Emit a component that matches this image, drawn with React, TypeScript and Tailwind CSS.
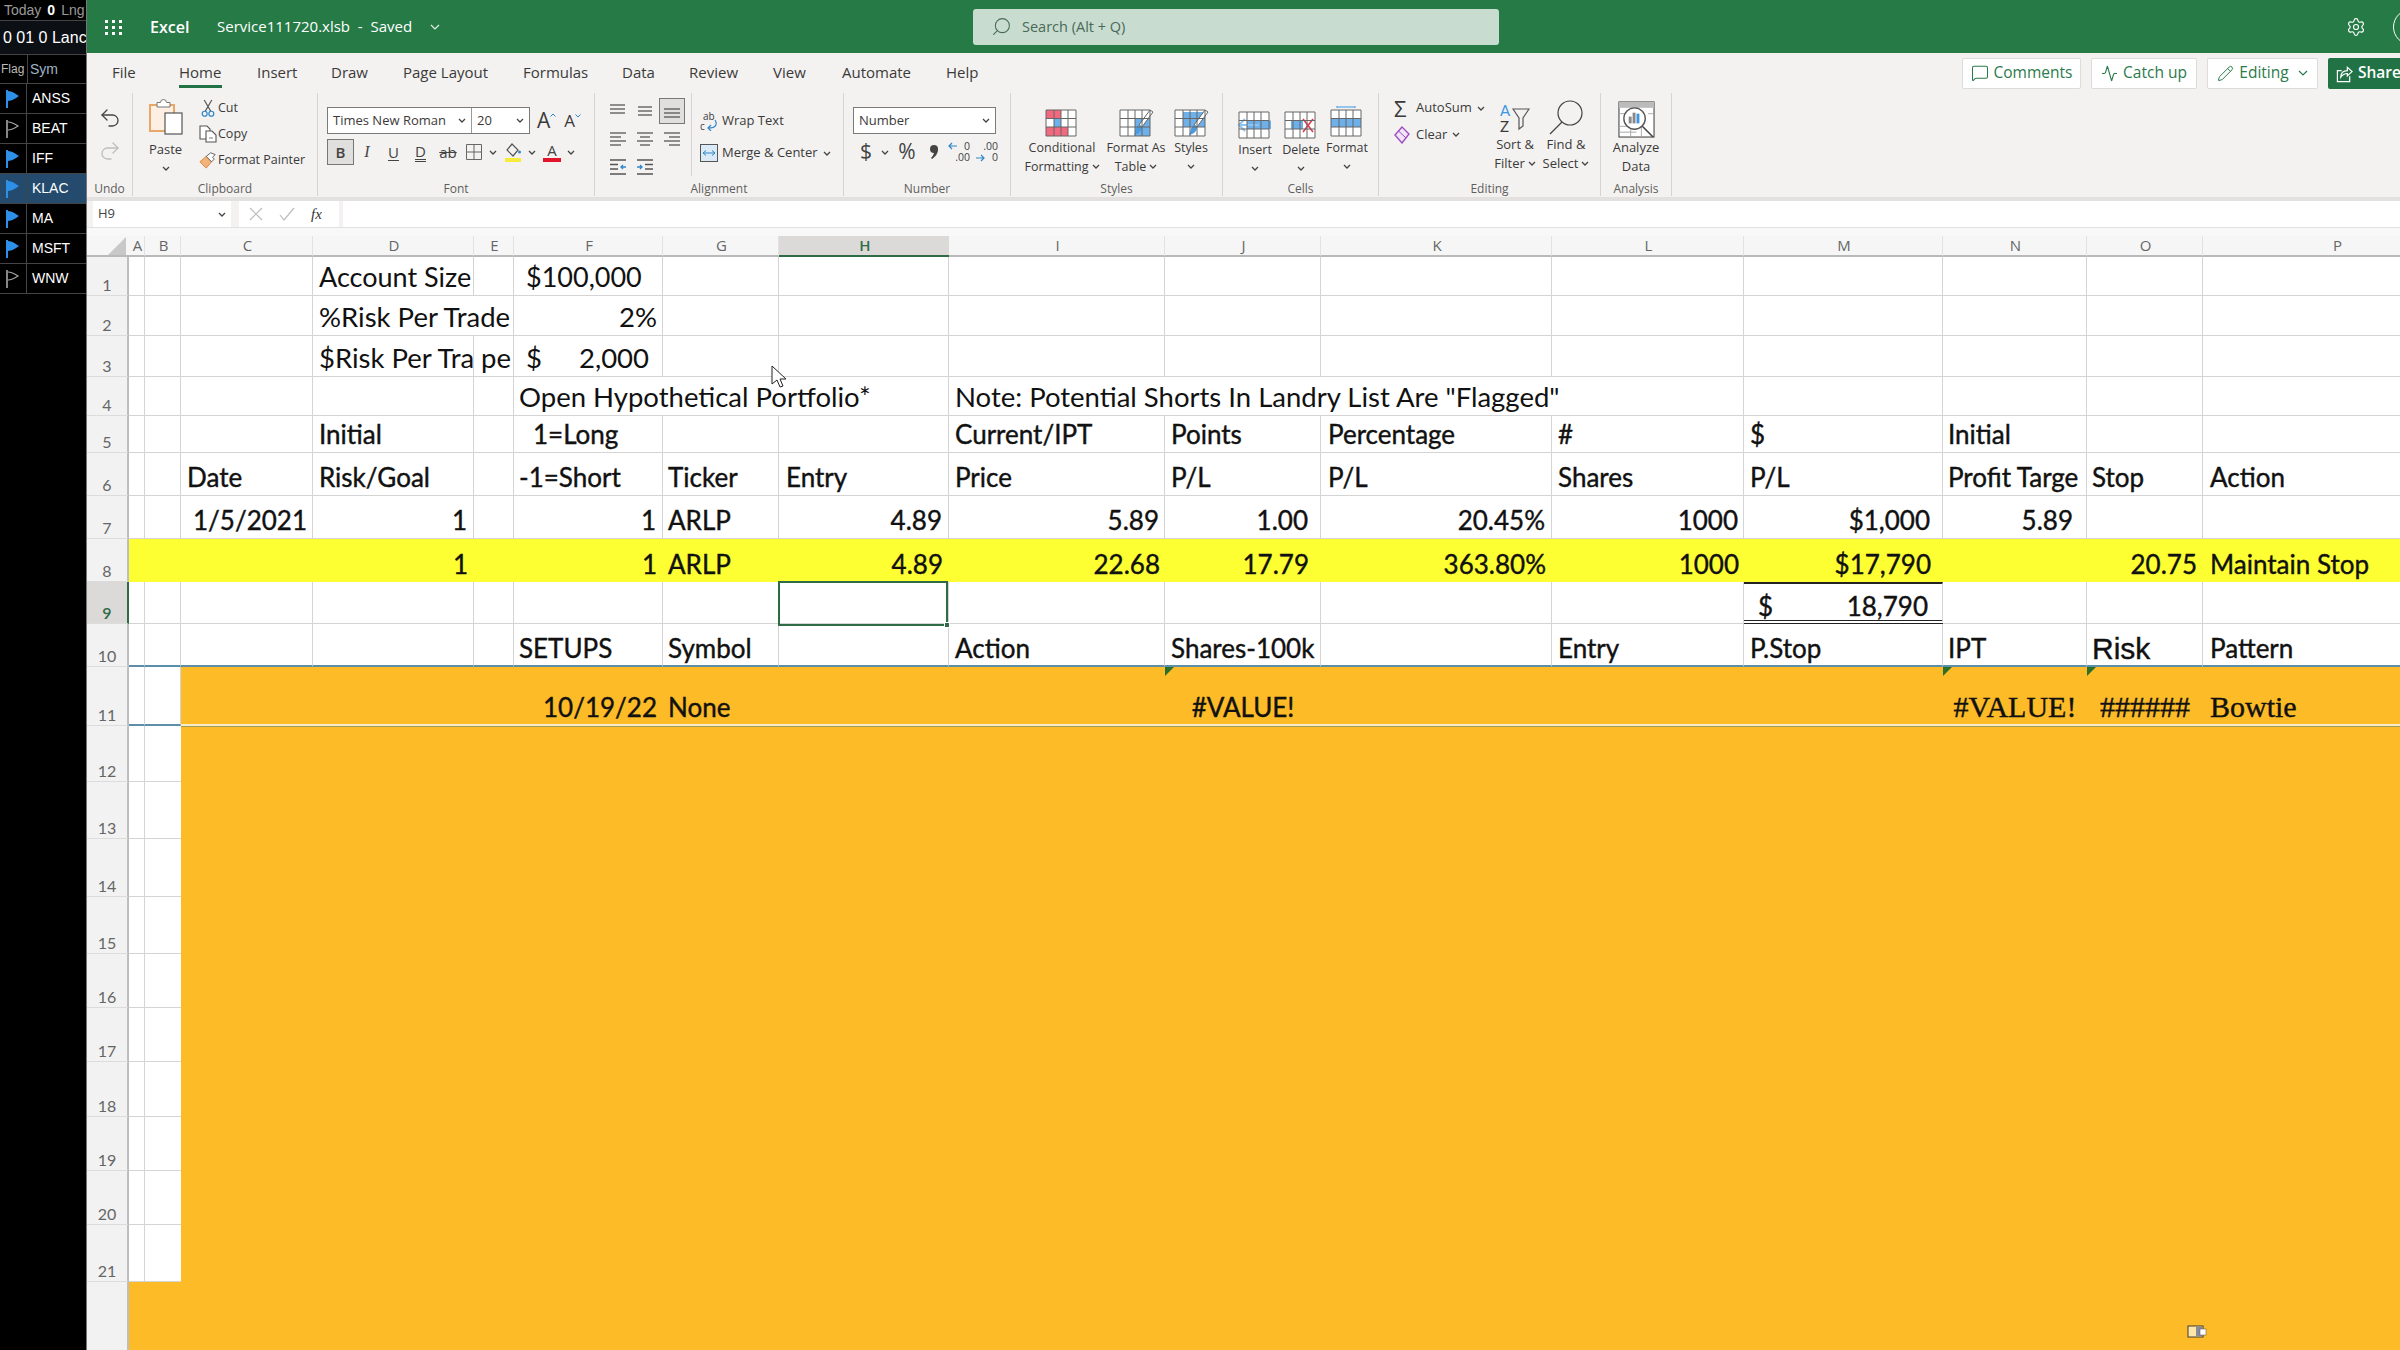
import { Activity, MessageSquare, Pencil, Redo2, Search, Settings, Undo2 } from 'lucide-react';
import type { ReactNode } from 'react';

const COLS = ['A', 'B', 'C', 'D', 'E', 'F', 'G', 'H', 'I', 'J', 'K', 'L', 'M', 'N', 'O', 'P'];

const TABS = [
  { label: 'File', width: 'w-[92px] pl-[25px]' },
  { label: 'Home', width: 'w-[78px]', active: true },
  { label: 'Insert', width: 'w-[74px]' },
  { label: 'Draw', width: 'w-[72px]' },
  { label: 'Page Layout', width: 'w-[120px]' },
  { label: 'Formulas', width: 'w-[99px]' },
  { label: 'Data', width: 'w-[67px]' },
  { label: 'Review', width: 'w-[84px]' },
  { label: 'View', width: 'w-[69px]' },
  { label: 'Automate', width: 'w-[104px]' },
  { label: 'Help', width: 'w-[50px]' },
];

const TICKERS = [
  { sym: 'ANSS', on: true },
  { sym: 'BEAT', on: false },
  { sym: 'IFF', on: true },
  { sym: 'KLAC', on: true, selected: true },
  { sym: 'MA', on: true },
  { sym: 'MSFT', on: true },
  { sym: 'WNW', on: false },
];

type Cell = {
  t?: string;
  left?: string;
  cls?: string;
  size?: string;
  inner?: string;
  span?: string;
  skip?: number;
  box?: string;
  tri?: boolean;
};

const R = 'justify-end pr-[6px]';
const L = 'pl-[6px]';
const SERIF = "font-['Liberation_Serif',serif] text-[30px]";

const CELLS: Record<string, Cell> = {
  D1: { t: 'Account Size', cls: L, size: 'text-[27px]' },
  F1: { t: '$100,000', cls: 'pl-[12px]', size: 'text-[27px]' },
  D2: { t: '%Risk Per Trade', cls: L, span: 'col-span-2', skip: 1 },
  F2: { t: '2%', cls: 'justify-end pr-[5px]' },
  D3: { t: '$Risk Per Tra', cls: L },
  E3: { t: 'pe', cls: 'pl-[7px]' },
  F3: { left: '$', t: '2,000', cls: 'pl-[12px] pr-[13px]' },
  F4: { t: 'Open Hypothetical Portfolio*', cls: 'pl-[5px]', span: 'col-span-3', skip: 2 },
  I4: { t: 'Note: Potential Shorts In Landry List Are "Flagged"', cls: L, span: 'col-span-4', skip: 3 },
  D5: { t: 'Initial', cls: L },
  F5: { t: '1=Long', cls: 'pl-[19px]' },
  I5: { t: 'Current/IPT', cls: L },
  J5: { t: 'Points', cls: L },
  K5: { t: 'Percentage', cls: 'pl-[7px]' },
  L5: { t: '#', cls: L },
  M5: { t: '$', cls: L },
  N5: { t: 'Initial', cls: 'pl-[5px]' },
  C6: { t: 'Date', cls: L },
  D6: { t: 'Risk/Goal', cls: L },
  F6: { t: '-1=Short', cls: 'pl-[5px]' },
  G6: { t: 'Ticker', cls: 'pl-[5px]' },
  H6: { t: 'Entry', cls: 'pl-[7px]' },
  I6: { t: 'Price', cls: L },
  J6: { t: 'P/L', cls: L },
  K6: { t: 'P/L', cls: 'pl-[7px]' },
  L6: { t: 'Shares', cls: L },
  M6: { t: 'P/L', cls: L },
  N6: { t: 'Profit Targe', cls: 'pl-[5px]' },
  O6: { t: 'Stop', cls: 'pl-[5px]' },
  P6: { t: 'Action', cls: 'pl-[7px]' },
  C7: { t: '1/5/2021', cls: 'justify-end pr-[5px]' },
  D7: { t: '1', cls: R },
  F7: { t: '1', cls: R },
  G7: { t: 'ARLP', cls: 'pl-[5px]' },
  H7: { t: '4.89', cls: R },
  I7: { t: '5.89', cls: 'justify-end pr-[5px]' },
  J7: { t: '1.00', cls: 'justify-end pr-[12px]' },
  K7: { t: '20.45%', cls: R },
  L7: { t: '1000', cls: 'justify-end pr-[5px]' },
  M7: { t: '$1,000', cls: 'justify-end pr-[12px]' },
  N7: { t: '5.89', cls: 'justify-end pr-[13px]' },
  D8: { t: '1', cls: R },
  F8: { t: '1', cls: R },
  G8: { t: 'ARLP', cls: 'pl-[5px]' },
  H8: { t: '4.89', cls: R },
  I8: { t: '22.68', cls: 'justify-end pr-[5px]' },
  J8: { t: '17.79', cls: 'justify-end pr-[12px]' },
  K8: { t: '363.80%', cls: R },
  L8: { t: '1000', cls: 'justify-end pr-[5px]' },
  M8: { t: '$17,790', cls: 'justify-end pr-[12px]' },
  O8: { t: '20.75', cls: R },
  P8: { t: 'Maintain Stop', cls: 'pl-[7px]' },
  M9: {
    left: '$',
    t: '18,790',
    cls: 'pl-[14px] pr-[14px]',
    inner: 'leading-[28px]',
    box: 'border-r border-r-[#d4d4d4] border-t-2 border-t-[#222] border-b-[4px] border-double border-b-[#222]',
  },
  F10: { t: 'SETUPS', cls: 'pl-[5px]' },
  G10: { t: 'Symbol', cls: 'pl-[5px]' },
  I10: { t: 'Action', cls: L },
  J10: { t: 'Shares-100k', cls: L },
  L10: { t: 'Entry', cls: L },
  M10: { t: 'P.Stop', cls: L },
  N10: { t: 'IPT', cls: 'pl-[5px]' },
  O10: { t: 'Risk', cls: "pl-[5px] font-['Liberation_Sans',sans-serif] text-[30px]" },
  P10: { t: 'Pattern', cls: 'pl-[7px]' },
  F11: { t: '10/19/22', cls: R },
  G11: { t: 'None', cls: 'pl-[5px]' },
  J11: { t: '#VALUE!', cls: 'justify-center', tri: true },
  N11: { t: '#VALUE!', cls: `justify-center ${SERIF}`, tri: true },
  O11: { t: '######', cls: `justify-center ${SERIF}`, tri: true },
  P11: { t: 'Bowtie', cls: `pl-[7px] ${SERIF}` },
};

function Chev({ className = '' }: { className?: string }) {
  return (
    <svg viewBox="0 0 8 5" className={`h-[5px] w-[8px] shrink-0 ${className}`} fill="none" stroke="#444" strokeWidth="1.3">
      <path d="M1 1l3 3 3-3" />
    </svg>
  );
}

function Flag({ on }: { on: boolean }) {
  return (
    <svg viewBox="0 0 16 18" className="h-[18px] w-[16px]">
      {on ? (
        <>
          <path d="M2 0v18" stroke="#2d8fe8" strokeWidth="2" />
          <path d="M3 1c4 0 8 3 11 5-3 2-7 5-11 5z" fill="#2d8fe8" />
        </>
      ) : (
        <>
          <path d="M2 0v18" stroke="#a8a8a8" strokeWidth="1.6" />
          <path d="M3 2c4 0 7 2 10 4-3 2-6 4-10 4" fill="none" stroke="#a8a8a8" strokeWidth="1.2" />
        </>
      )}
    </svg>
  );
}

function Sidebar() {
  return (
    <aside className="flex w-[87px] shrink-0 flex-col overflow-hidden border-r border-[#777] bg-black font-['Liberation_Sans',sans-serif] whitespace-nowrap">
      <div className="flex h-[21px] items-center gap-[6px] border-b border-[#444] pl-[4px] text-[14px] text-[#9a9a9a]">
        Today <span className="font-bold text-white">0</span> Lng
      </div>
      <div className="flex h-[33px] items-center bg-[#0c1014] pl-[3px] text-[16px] text-white">0 01 0 Lanc</div>
      <div className="flex h-[30px] items-center border-y border-[#444] text-[#9fb4c8]">
        <span className="w-[27px] pl-[1px] text-[12px] text-[#bbb]">Flag</span>
        <span className="border-l border-[#444] pl-[2px] text-[14px] leading-[28px]">Sym</span>
      </div>
      {TICKERS.map((t) => (
        <div key={t.sym} className={`flex h-[30px] items-center border-b border-[#444] ${t.selected ? 'bg-[#244a6e]' : ''}`}>
          <div className="flex h-full w-[27px] items-center justify-center border-r border-[#444]">
            <Flag on={t.on} />
          </div>
          <span className="pl-[5px] text-[14px] text-white">{t.sym}</span>
        </div>
      ))}
    </aside>
  );
}

function Waffle() {
  return (
    <svg viewBox="0 0 18 18" className="h-[18px] w-[18px]" fill="#fff">
      {[1, 8, 15].map((x) => [2, 8, 14].map((y) => <rect key={`${x}-${y}`} x={x} y={y} width="3" height="3" />))}
    </svg>
  );
}

function TitleBar() {
  return (
    <header className="flex h-[53px] shrink-0 items-center bg-[#257a46] text-white">
      <div className="ml-[17px] w-[46px]">
        <Waffle />
      </div>
      <span className="w-[67px] text-[16px] font-semibold">Excel</span>
      <span className="w-[213px] text-[15px]">Service111720.xlsb&nbsp; - &nbsp;Saved</span>
      <svg viewBox="0 0 10 6" className="h-[6px] w-[10px]" fill="none" stroke="#e5efe8" strokeWidth="1.2">
        <path d="M1 1l4 4 4-4" />
      </svg>
      <div className="ml-[533px] flex h-[36px] w-[526px] items-center rounded-[3px] bg-[#c9dcd0] pl-[18px] text-[#486a57]">
        <Search size={21} strokeWidth={1.2} className="-scale-x-100" />
        <span className="pl-[10px] text-[14.5px]">Search (Alt + Q)</span>
      </div>
      <div className="flex-1" />
      <Settings size={20} strokeWidth={1.4} className="mr-[27px]" />
      <div className="mr-[-14px] h-[36px] w-[21px] rounded-l-full border border-white" />
    </header>
  );
}

function TabButtons() {
  return (
    <div className="flex items-center gap-[10px] text-[15.5px]">
      <div className="flex h-[31px] w-[119px] items-center justify-center gap-[5px] rounded-[2px] border border-[#dcdcdc] bg-white text-[#2b7a4b]">
        <MessageSquare size={18} strokeWidth={1.4} />
        Comments
      </div>
      <div className="flex h-[31px] w-[106px] items-center justify-center gap-[5px] rounded-[2px] border border-[#dcdcdc] bg-white text-[#2b7a4b]">
        <Activity size={17} strokeWidth={1.6} />
        Catch up
      </div>
      <div className="flex h-[31px] w-[111px] items-center justify-center gap-[5px] rounded-[2px] border border-[#dcdcdc] bg-white text-[#2b7a4b]">
        <Pencil size={17} strokeWidth={1.4} />
        Editing
        <svg viewBox="0 0 10 6" className="ml-[4px] h-[6px] w-[10px]" fill="none" stroke="#2b7a4b" strokeWidth="1.2">
          <path d="M1 1l4 4 4-4" />
        </svg>
      </div>
      <div className="flex h-[31px] w-[72px] items-center gap-[5px] overflow-hidden rounded-l-[2px] bg-[#217346] pl-[8px] font-semibold text-white">
        <svg viewBox="0 0 18 20" className="h-[19px] w-[17px] shrink-0" fill="none" stroke="#fff" strokeWidth="1.3">
          <path d="M6 7H1.5v11.5h13V13" />
          <path d="M5 14c0-5 3-7 7-7V3.5L17 8l-5 4.500V10c-3 0-5 1-7 4z" />
        </svg>
        Share
      </div>
    </div>
  );
}

function Group({ label, width, children }: { label: string; width: string; children: ReactNode }) {
  return (
    <div className={`flex h-full shrink-0 flex-col border-r border-[#d6d4d2] ${width}`}>
      <div className="flex min-h-0 flex-1">{children}</div>
      <div className="h-[15px] text-center text-[12px] leading-[16px] text-[#605e5c]">{label}</div>
    </div>
  );
}

function PasteIcon() {
  return (
    <svg viewBox="0 0 34 36" className="h-[36px] w-[34px]">
      <rect x="1" y="6" width="24" height="26" fill="#fdf0e2" stroke="#e8a767" strokeWidth="2" />
      <path d="M8 6V3.500h3.500a3 3 0 016 0H21V8H8z" fill="#fff" stroke="#777" strokeWidth="1" />
      <rect x="16" y="14" width="17" height="21" fill="#fff" stroke="#555" strokeWidth="1.2" />
    </svg>
  );
}

function CutIcon() {
  return (
    <svg viewBox="0 0 14 20" className="h-[19px] w-[14px]" fill="none">
      <path d="M3 1l7 12M11 1L4 13" stroke="#555" strokeWidth="1.2" />
      <circle cx="3.500" cy="15.500" r="2.600" stroke="#2f86c9" strokeWidth="1.3" />
      <circle cx="10.500" cy="15.500" r="2.600" stroke="#2f86c9" strokeWidth="1.3" />
    </svg>
  );
}

function CopyIcon() {
  return (
    <svg viewBox="0 0 18 18" className="h-[18px] w-[18px]" fill="#fff" stroke="#555" strokeWidth="1.1">
      <path d="M1 1h7l3 3v10H1z" />
      <path d="M7 6h6l4 4v7H7z" />
      <path d="M10 13h4" stroke="#888" />
    </svg>
  );
}

function BrushIcon() {
  return (
    <svg viewBox="0 0 20 20" className="h-[18px] w-[20px]" fill="none">
      <path d="M1 12l7-6 6 6-6 7z" fill="#f3b27a" stroke="#d9803c" strokeWidth="1" />
      <path d="M8 6l5-4 5 2-3 3 2 2-3 3z" fill="#fff" stroke="#555" strokeWidth="1" />
    </svg>
  );
}

function ClipItem({ icon, text }: { icon: ReactNode; text: string }) {
  return (
    <div className="flex h-[26px] items-center text-[12.5px]">
      <div className="flex w-[21px] justify-center">{icon}</div>
      <span>{text}</span>
    </div>
  );
}

function SelectBox({ text, width, cls = '' }: { text: string; width: string; cls?: string }) {
  return (
    <div className={`flex h-full items-center justify-between pl-[5px] pr-[5px] ${width} ${cls}`}>
      <span className="text-[13px]">{text}</span>
      <Chev />
    </div>
  );
}

function Slot({ width, children }: { width: string; children: ReactNode }) {
  return <div className={`flex items-center justify-center ${width}`}>{children}</div>;
}

function AlignLines({ lines }: { lines: [number, number, number][] }) {
  return (
    <svg viewBox="0 0 18 18" className="h-[18px] w-[18px]" stroke="#555" strokeWidth="1.3">
      {lines.map(([a, b, y]) => (
        <path key={y} d={`M${a} ${y}H${b}`} />
      ))}
    </svg>
  );
}

function IndentIcon({ right }: { right?: boolean }) {
  return (
    <svg viewBox="0 0 18 18" className="h-[18px] w-[18px]" fill="none">
      <path d={right ? 'M1 2h16M9 6.500h8M9 11h8M1 16h16' : 'M1 2h16M1 6.500h8M1 11h8M1 16h16'} stroke="#555" strokeWidth="1.3" />
      <path d={right ? 'M1 9h5M4 7l2 2-2 2' : 'M17 9h-5M14 7l-2 2 2 2'} stroke="#2f86c9" strokeWidth="1.3" />
    </svg>
  );
}

function FontGroup() {
  return (
    <div className="pl-[9px] pt-[14px]">
      <div className="flex h-[27px] items-center">
        <div className="flex h-[27px] border border-[#7a7a7a] bg-white">
          <SelectBox text="Times New Roman" width="w-[144px]" cls="border-r border-[#9a9a9a]" />
          <SelectBox text="20" width="w-[57px]" />
        </div>
        <span className="pl-[7px] text-[21px] leading-none">A</span>
        <svg viewBox="0 0 6 4" className="mb-[12px] h-[4px] w-[6px]" fill="none" stroke="#2f86c9">
          <path d="M.5 3.500L3 1l2.500 2.500" />
        </svg>
        <span className="pl-[8px] text-[17px] leading-none">A</span>
        <svg viewBox="0 0 6 4" className="mb-[10px] h-[4px] w-[6px]" fill="none" stroke="#2f86c9">
          <path d="M.5.500L3 3 5.500.500" />
        </svg>
      </div>
      <div className="mt-[5px] flex h-[26px] items-stretch text-[15px] text-[#444]">
        <div className="flex w-[27px] items-center justify-center border border-[#777] bg-[#e1dfdd] font-semibold">B</div>
        <Slot width="w-[26px]">
          <span className="font-['Liberation_Serif',serif] text-[16px] italic">I</span>
        </Slot>
        <Slot width="w-[27px]">
          <span className="underline underline-offset-2">U</span>
        </Slot>
        <Slot width="w-[27px]">
          <span className="border-b-[3px] border-double border-[#444] leading-[16px]">D</span>
        </Slot>
        <Slot width="w-[28px]">
          <span className="line-through">ab</span>
        </Slot>
        <Slot width="w-[24px]">
          <svg viewBox="0 0 16 16" className="h-[16px] w-[16px]" fill="none" stroke="#666" strokeWidth="1">
            <path d="M.5.500h15v15H.5zM8 .5v15M.5 8h15" />
          </svg>
        </Slot>
        <Slot width="w-[14px]">
          <Chev />
        </Slot>
        <Slot width="w-[26px]">
          <svg viewBox="0 0 18 19" className="h-[19px] w-[18px]" fill="none">
            <path d="M8 1l6 6-5 6-6-6z" stroke="#555" strokeWidth="1.2" />
            <circle cx="15.500" cy="9" r="1.500" fill="#2f86c9" />
            <rect x="1" y="15" width="16" height="4" fill="#f6ec3c" />
          </svg>
        </Slot>
        <Slot width="w-[12px]">
          <Chev />
        </Slot>
        <Slot width="w-[28px]">
          <div className="flex flex-col items-center">
            <span className="text-[15px] leading-[16px]">A</span>
            <span className="h-[4px] w-[18px] bg-[#e3132b]" />
          </div>
        </Slot>
        <Slot width="w-[10px]">
          <Chev />
        </Slot>
      </div>
    </div>
  );
}

function AlignmentGroup() {
  return (
    <>
      <div className="w-[96px] shrink-0 pl-[9px] pt-[4px]">
        <div className="grid grid-cols-[27px_27px_27px] grid-rows-[28px_28px_28px] items-center justify-items-center">
          <AlignLines lines={[[1, 16, 3], [1, 16, 7], [1, 16, 11]]} />
          <AlignLines lines={[[2, 16, 5], [2, 16, 9], [2, 16, 13]]} />
          <div className="flex h-[26px] w-[26px] items-center justify-center border border-[#777] bg-[#e1dfdd]">
            <AlignLines lines={[[1, 17, 7], [1, 17, 11], [1, 17, 15]]} />
          </div>
          <AlignLines lines={[[1, 17, 3], [1, 12, 7], [1, 17, 11], [1, 12, 15]]} />
          <AlignLines lines={[[1, 17, 3], [4, 14, 7], [1, 17, 11], [4, 14, 15]]} />
          <AlignLines lines={[[1, 17, 3], [6, 17, 7], [1, 17, 11], [6, 17, 15]]} />
          <IndentIcon />
          <IndentIcon right />
        </div>
      </div>
      <div className="mb-[5px] flex-1 border-l border-[#d6d4d2] pl-[8px] pt-[14px]">
        <div className="flex h-[28px] items-center">
          <div className="relative h-[20px] w-[18px] text-[10px] leading-[10px]">
            <div className="pl-[3px]">ab</div>
            <div>c</div>
            <svg viewBox="0 0 12 12" className="absolute bottom-0 right-0 h-[12px] w-[12px]" fill="none" stroke="#2f86c9" strokeWidth="1.2">
              <path d="M9 1c3 5 0 8-6 8M5 6L2 9l3 3" />
            </svg>
          </div>
          <span className="pl-[4px]">Wrap Text</span>
        </div>
        <div className="mt-[4px] flex h-[28px] items-center">
          <svg viewBox="0 0 18 18" className="h-[18px] w-[18px]" fill="none">
            <rect x=".5" y=".5" width="17" height="17" fill="#dbeaf7" stroke="#555" />
            <path d="M3 9h12M6 6.500L3 9l3 2.500M12 6.500L15 9l-3 2.500" stroke="#2f86c9" />
          </svg>
          <span className="pl-[4px]">Merge &amp; Center</span>
          <Chev className="ml-[5px]" />
        </div>
      </div>
    </>
  );
}

// the two "decimal places" buttons: digits stacked, with a small blue arrow
function DecimalIcon({ top, bottom, more }: { top: string; bottom: string; more?: boolean }) {
  return (
    <div className="relative h-[22px] w-[22px] text-right text-[10.5px] leading-[11px]">
      <div>{top}</div>
      <div>{bottom}</div>
      <svg
        viewBox="0 0 9 8"
        className={`absolute left-0 h-[8px] w-[9px] ${more ? 'top-[1px]' : 'bottom-[1px]'}`}
        fill="none"
        stroke="#2f86c9"
        strokeWidth="1.2"
      >
        <path d={more ? 'M9 4H1M4 1L1 4l3 3' : 'M0 4h8M5 1l3 3-3 3'} />
      </svg>
    </div>
  );
}

function NumberGroup() {
  return (
    <div className="pl-[9px] pt-[14px]">
      <div className="flex h-[27px] w-[143px] border border-[#7a7a7a] bg-white">
        <SelectBox text="Number" width="w-full" />
      </div>
      <div className="mt-[5px] flex h-[26px] items-center text-[#444]">
        <Slot width="w-[26px]">
          <span className="text-[21px]">$</span>
        </Slot>
        <Slot width="w-[12px]">
          <Chev />
        </Slot>
        <Slot width="w-[32px]">
          <span className="text-[21px]">%</span>
        </Slot>
        <Slot width="w-[22px]">
          <svg viewBox="0 0 10 16" className="h-[16px] w-[10px]" fill="#444">
            <circle cx="5" cy="5" r="4" />
            <path d="M9 5c0 5-3 8-6 10l-1-1c2-2 3-4 3-6z" />
          </svg>
        </Slot>
        <Slot width="w-[28px]">
          <DecimalIcon top="0" bottom=".00" more />
        </Slot>
        <Slot width="w-[28px]">
          <DecimalIcon top=".00" bottom="0" />
        </Slot>
      </div>
    </div>
  );
}

function Sheetlet({ children }: { children?: ReactNode }) {
  return (
    <svg viewBox="0 0 36 32" className="h-[32px] w-[36px]" fill="none">
      <rect x="2" y="4" width="30" height="26" fill="#fff" />
      {children}
      <path d="M2 4h30v26H2zM2 12.500h30M2 21h30M10 4v26M17 4v26M24 4v26" stroke="#666" strokeWidth="1" />
    </svg>
  );
}

function MiniBrush() {
  return (
    <>
      <path d="M35 6L24 21l-3-2L32 4z" fill="#fff" stroke="#666" strokeWidth="1" />
      <path d="M21 19l3 2c0 4-3 7-8 8 2-3 1-8 5-10z" fill="#4a9be0" />
    </>
  );
}

function BigButton({ width, icon, lines, chevInline, chevBelow, top = 'h-[45px]' }: {
  width: string;
  icon: ReactNode;
  lines: string[];
  chevInline?: boolean;
  chevBelow?: boolean;
  top?: string;
}) {
  return (
    <div className={`flex shrink-0 flex-col items-center text-center leading-[19px] ${width}`}>
      <div className={`flex items-end justify-center ${top}`}>{icon}</div>
      {lines.map((line, i) => (
        <div key={line} className="flex h-[19px] items-center whitespace-nowrap">
          {line}
          {chevInline && i === lines.length - 1 && <Chev className="ml-[3px]" />}
        </div>
      ))}
      {chevBelow && (
        <div className="flex h-[19px] items-center">
          <Chev />
        </div>
      )}
    </div>
  );
}

function AnalyzeIcon() {
  return (
    <svg viewBox="0 0 38 38" className="h-[37px] w-[37px]" fill="none">
      <rect x="1" y="1" width="36" height="36" fill="#fff" stroke="#333" />
      <rect x="1" y="1" width="36" height="6" fill="#bbb" />
      <path d="M1 13h6M31 13h6M1 26h10M1 32h18M13 26v11M24 26v11" stroke="#aaa" />
      <circle cx="17" cy="18" r="11" fill="#fff" stroke="#555" strokeWidth="1.4" />
      <path d="M25 26l11 11" stroke="#444" strokeWidth="1.6" />
      <rect x="11" y="16" width="3" height="7" fill="#888" />
      <rect x="15" y="12" width="3" height="11" fill="#888" />
      <rect x="19" y="13" width="3" height="10" fill="#3f97e3" />
    </svg>
  );
}

function SortIcon() {
  return (
    <div className="flex h-[33px] w-[30px] items-start font-['Lato',sans-serif] text-[15px] leading-[16px]">
      <div className="w-[12px] text-left">
        <div className="text-[#3f97e3]">A</div>
        <div>Z</div>
      </div>
      <svg viewBox="0 0 18 24" className="mt-[6px] h-[24px] w-[18px]" fill="none" stroke="#555" strokeWidth="1.2">
        <path d="M1 1h16l-6 9v8l-4 3V10z" />
      </svg>
    </div>
  );
}

function Ribbon() {
  return (
    <div className="flex h-[144px] shrink-0 flex-col bg-[#f3f2f1] text-[#3b3a39]">
      <div className="flex h-[40px] items-center justify-between text-[15px]">
        <div className="flex h-full shrink-0 items-center pb-[2px]">
          {TABS.map((tab) => (
            <div key={tab.label} className={`relative flex h-full shrink-0 items-center whitespace-nowrap ${tab.width}`}>
              {tab.label}
              {tab.active && <span className="absolute bottom-[3px] left-0 h-[3px] w-[43px] bg-[#217346]" />}
            </div>
          ))}
        </div>
        <TabButtons />
      </div>
      <div className="flex h-[103px] text-[13px]">
        <Group label="Undo" width="w-[46px]">
          <div className="flex w-full flex-col items-center gap-[9px] pt-[13px]">
            <Undo2 size={24} strokeWidth={1.3} color="#444" />
            <Redo2 size={24} strokeWidth={1.3} color="#bdbdbd" />
          </div>
        </Group>
        <Group label="Clipboard" width="w-[185px]">
          <div className="flex w-[64px] shrink-0 flex-col items-center pl-[1px] pt-[6px]">
            <PasteIcon />
            <span className="pt-[5px]">Paste</span>
            <Chev className="mt-[6px]" />
          </div>
          <div className="pt-[2px]">
            <ClipItem icon={<CutIcon />} text="Cut" />
            <ClipItem icon={<CopyIcon />} text="Copy" />
            <ClipItem icon={<BrushIcon />} text="Format Painter" />
          </div>
        </Group>
        <Group label="Font" width="w-[277px]">
          <FontGroup />
        </Group>
        <Group label="Alignment" width="w-[249px]">
          <AlignmentGroup />
        </Group>
        <Group label="Number" width="w-[167px]">
          <NumberGroup />
        </Group>
        <Group label="Styles" width="w-[212px]">
          <div className="flex pl-[13px] text-[12.5px]">
            <BigButton
              width="w-[76px]"
              lines={['Conditional', 'Formatting']}
              chevInline
              icon={
                <Sheetlet>
                  <path d="M2 4h15v9H2zM2 21h22v9H2z" fill="#f2687f" />
                  <rect x="10" y="12.500" width="7" height="8.500" fill="#6db0ea" />
                </Sheetlet>
              }
            />
            <BigButton
              width="w-[72px]"
              lines={['Format As', 'Table']}
              chevInline
              icon={
                <Sheetlet>
                  <rect x="17" y="12.500" width="15" height="17.500" fill="#6db0ea" />
                  <MiniBrush />
                </Sheetlet>
              }
            />
            <BigButton
              width="w-[38px]"
              lines={['Styles']}
              chevBelow
              icon={
                <Sheetlet>
                  <rect x="10" y="6" width="22" height="15" fill="#6db0ea" />
                  <MiniBrush />
                </Sheetlet>
              }
            />
          </div>
        </Group>
        <Group label="Cells" width="w-[156px]">
          <div className="flex pl-[9px] text-[12.5px]">
            <BigButton
              width="w-[46px]"
              lines={['Insert']}
              chevBelow
              top="h-[47px]"
              icon={
                <Sheetlet>
                  <rect x="10" y="12.500" width="24" height="8.500" fill="#6db0ea" />
                  <path d="M22 17H2M8 11l-6 6 6 6" stroke="#8fc3f0" strokeWidth="2" />
                </Sheetlet>
              }
            />
            <BigButton
              width="w-[46px]"
              lines={['Delete']}
              chevBelow
              top="h-[47px]"
              icon={
                <Sheetlet>
                  <rect x="8" y="12.500" width="12" height="8.500" fill="#6db0ea" />
                  <path d="M20 11l10 13M30 11L20 24" stroke="#e9374c" strokeWidth="1.600" />
                </Sheetlet>
              }
            />
            <BigButton
              width="w-[46px]"
              lines={['Format']}
              chevBelow
              icon={
                <Sheetlet>
                  <rect x="2" y="12.500" width="30" height="8.500" fill="#6db0ea" />
                  <path d="M8 1h18M8 0v2M26 0v2" stroke="#3f97e3" />
                </Sheetlet>
              }
            />
          </div>
        </Group>
        <Group label="Editing" width="w-[222px]">
          <div className="flex w-[111px] shrink-0 flex-col pl-[15px] pt-[2px] text-[13px]">
            <div className="flex h-[26px] items-center">
              <span className="w-[22px] text-[22px] leading-none">Σ</span>
              AutoSum
              <Chev className="ml-[5px]" />
            </div>
            <div className="flex h-[27px] items-center">
              <svg viewBox="0 0 16 18" className="mr-[6px] h-[18px] w-[16px]" fill="none">
                <path d="M1 9l7-8 7 7-7 9z" fill="#f3e4f8" stroke="#9b4fbf" strokeWidth="1.400" />
                <path d="M4.500 5L12 12" stroke="#9b4fbf" />
              </svg>
              Clear
              <Chev className="ml-[5px]" />
            </div>
          </div>
          <BigButton width="w-[50px]" lines={['Sort &', 'Filter']} chevInline top="h-[42px]" icon={<SortIcon />} />
          <BigButton
            width="w-[52px]"
            lines={['Find &', 'Select']}
            chevInline
            top="h-[42px]"
            icon={
              <svg viewBox="0 0 34 35" className="h-[35px] w-[34px]" fill="none" stroke="#444" strokeWidth="1.200">
                <circle cx="21" cy="13" r="12" />
                <path d="M13 22L1 34" />
              </svg>
            }
          />
        </Group>
        <Group label="Analysis" width="w-[71px]">
          <BigButton width="w-full" lines={['Analyze', 'Data']} icon={<AnalyzeIcon />} />
        </Group>
      </div>
    </div>
  );
}

function FormulaBar() {
  return (
    <div className="shrink-0 bg-[#f3f2f1]">
      <div className="h-[4px] bg-[#e3e1df]" />
      <div className="flex h-[26px] gap-[4px] pl-[6px] text-[13px] text-[#444]">
        <div className="flex w-[138px] items-center justify-between bg-white pl-[5px] pr-[5px]">
          H9
          <Chev />
        </div>
        <div className="ml-[4px] flex w-[100px] items-center gap-[16px] bg-white pl-[10px]">
          <svg viewBox="0 0 14 14" className="h-[14px] w-[14px]" fill="none" stroke="#bdbdbd" strokeWidth="1.2">
            <path d="M1 1l12 12M13 1L1 13" />
          </svg>
          <svg viewBox="0 0 16 14" className="h-[14px] w-[16px]" fill="none" stroke="#bdbdbd" strokeWidth="1.2">
            <path d="M1 8l4 5L15 1" />
          </svg>
          <span className="font-['Liberation_Serif',serif] text-[15px] italic text-[#333]">fx</span>
        </div>
        <div className="flex-1 bg-white" />
      </div>
      <div className="h-[9px] border-t border-[#e3e1df] bg-[#f8f8f8]" />
    </div>
  );
}

function SheetCell({ row, col }: { row: number; col: string }) {
  const key = `${col}${row}`;
  const cell = CELLS[key] ?? {};
  const fill = row === 8 ? 'bg-[#feff33]' : row === 11 && col > 'B' ? 'bg-[#fcbb27]' : 'bg-white';
  let border = 'border-r border-b border-[#d4d4d4]';
  if (row === 8) border = '';
  if (row === 10) border = 'border-r border-[#d4d4d4] border-b-2 border-b-[#5d8ea8]';
  if (row === 11) border = col > 'B' ? 'border-b-2 border-[#f6ecc4]' : 'border-r border-[#d4d4d4] border-b-2 border-b-[#5d8ea8]';
  // rows 5 and down are the heavier text in the sheet
  const size = cell.size ?? (row < 5 ? 'text-[27.5px]' : 'text-[26px] [-webkit-text-stroke:0.4px_#111]');
  const lead = row === 10 ? 'leading-[33px]' : row === 11 ? 'leading-[34px]' : 'leading-[36px]';
  return (
    <div
      className={`relative flex items-end whitespace-nowrap text-[#111] ${size} ${lead} ${key === 'H9' ? '' : 'overflow-hidden'} ${fill} ${cell.box ?? border} ${cell.span ?? ''} ${cell.cls ?? ''}`}
    >
      {cell.left ? (
        <div className={`flex w-full justify-between ${cell.inner ?? ''}`}>
          <span>{cell.left}</span>
          <span>{cell.t}</span>
        </div>
      ) : (
        cell.t
      )}
      {cell.tri && (
        <span className="absolute left-0 top-0 h-0 w-0 border-r-[9px] border-t-[9px] border-r-transparent border-t-[#2b6e2b]" />
      )}
      {key === 'H9' && (
        <span className="absolute -bottom-[3px] -left-px -top-px right-0 z-10 border-2 border-[#2f6b45]">
          <span className="absolute -bottom-[4px] -right-[4px] h-[6px] w-[6px] border border-white bg-[#2f6b45]" />
        </span>
      )}
    </div>
  );
}

function SheetRow({ row }: { row: number }) {
  const out: ReactNode[] = [];
  let skip = 0;
  const active = row === 9;
  out.push(
    <div
      key="hdr"
      className={`flex items-end justify-center border-b border-[#dcdcdc] pb-[1px] text-[16px] leading-[18px] ${active ? 'border-r-2 border-r-[#2f6b45] bg-[#dcdad8] font-semibold text-[#2f6b45]' : 'border-r-2 border-r-[#bdbdbd] bg-[#f2f2f2] text-[#666]'}`}
    >
      {row}
    </div>,
  );
  if (row >= 12) {
    out.push(<div key="A" className="border-b border-r border-[#d4d4d4] bg-white" />);
    out.push(<div key="B" className="border-b border-[#d4d4d4] bg-white" />);
    out.push(<div key="C" className={`col-span-14 bg-[#fcbb27] ${row === 12 ? 'border-t border-[#a39b5e]' : ''}`} />);
    return <>{out}</>;
  }
  for (const col of COLS) {
    if (skip > 0) {
      skip -= 1;
      continue;
    }
    skip = CELLS[`${col}${row}`]?.skip ?? 0;
    out.push(<SheetCell key={col} row={row} col={col} />);
  }
  return <>{out}</>;
}

function Sheet() {
  return (
    <div className="relative flex min-h-0 flex-1 flex-col bg-[#fcbb27] font-['Lato',sans-serif]">
      <div className="grid grid-cols-[42px_16px_36px_132px_161px_40px_149px_116px_170px_216px_156px_231px_192px_199px_144px_116px_268px] grid-rows-[21px_39px_40px_41px_39px_37px_43px_43px_43px_42px_43px_59px_56px_57px_58px_57px_54px_54px_55px_54px_54px_57px]">
        <div className="flex items-end justify-end border-b-2 border-[#b9b9b9] bg-[#f6f6f6] pr-[3px]">
          <div className="h-0 w-0 border-b-[18px] border-l-[18px] border-b-[#c8c8c8] border-l-transparent" />
        </div>
        {COLS.map((col) => (
          <div
            key={col}
            className={`flex items-center justify-center border-b-2 pl-[2px] font-['Open_Sans',sans-serif] text-[15px] ${col === 'H' ? 'border-[#2f6b45] bg-[#dcdad8] font-semibold text-[#2f6b45]' : 'border-b-[#b9b9b9] border-r border-r-[#e2e2e2] bg-[#f6f6f6] text-[#666]'}`}
          >
            {col}
          </div>
        ))}
        {Array.from({ length: 21 }, (_, i) => (
          <SheetRow key={i} row={i + 1} />
        ))}
      </div>
      <div className="flex-1">
        <div className="h-full w-[42px] border-r-2 border-[#bdbdbd] bg-[#f2f2f2]" />
      </div>
      {/* mouse pointer */}
      <svg viewBox="0 0 16 24" className="absolute left-[684px] top-[129px] h-[24px] w-[16px]">
        <path d="M1 1v18l5-4 3 7 3-1-3-7h6z" fill="#fff" stroke="#222" strokeWidth="1" />
      </svg>
      {/* quick analysis tag */}
      <svg viewBox="0 0 20 13" className="absolute left-[2100px] top-[1089px] h-[13px] w-[20px]">
        <rect x="1" y="1" width="15" height="11" fill="#fde7a8" stroke="#3c3c3c" />
        <rect x="9" y="2" width="6" height="9" fill="#8a8a9a" />
        <rect x="13" y="4" width="6" height="6" fill="#fff" stroke="#555" strokeWidth=".5" />
      </svg>
    </div>
  );
}

export default function App() {
  return (
    <div className="flex h-[1350px] w-[2400px] overflow-hidden bg-black font-['Open_Sans',sans-serif]">
      <Sidebar />
      <main className="flex min-w-0 flex-1 flex-col">
        <TitleBar />
        <Ribbon />
        <FormulaBar />
        <Sheet />
      </main>
    </div>
  );
}
